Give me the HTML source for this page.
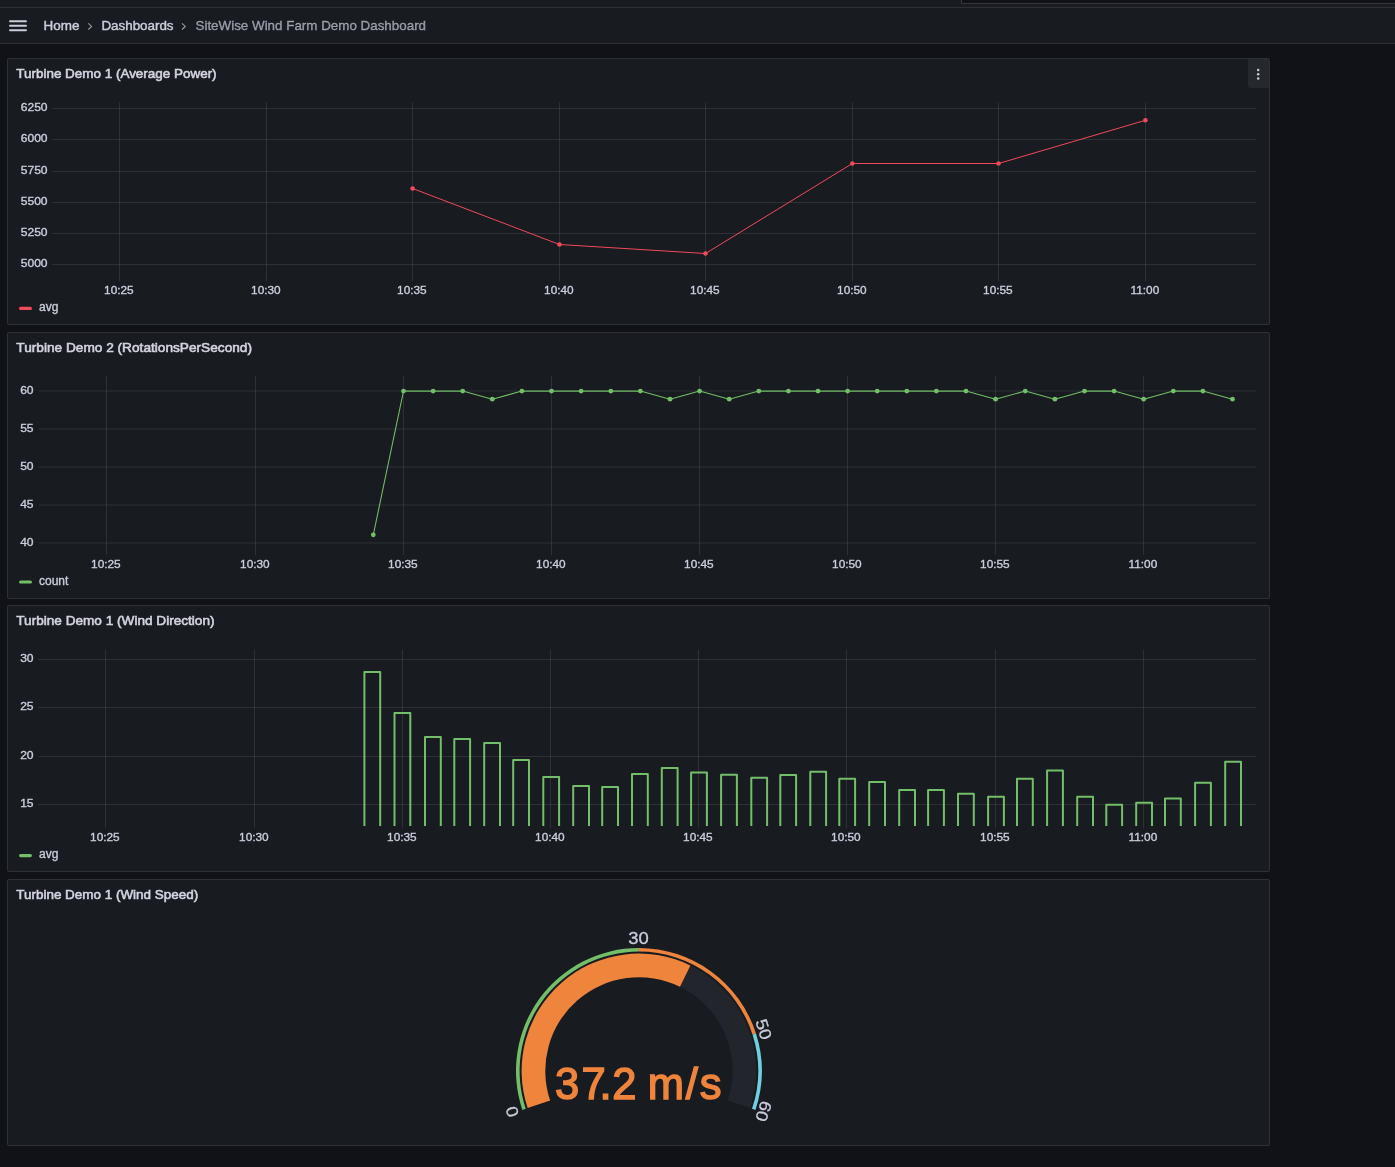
<!DOCTYPE html>
<html><head><meta charset="utf-8"><title>SiteWise Wind Farm Demo Dashboard</title>
<style>
*{box-sizing:border-box;margin:0;padding:0}
html,body{width:1395px;height:1167px;overflow:hidden;background:#111217;font-family:"Liberation Sans",sans-serif;color:#ccccdc}
.abs{position:absolute}
.topstrip{position:absolute;left:0;top:0;width:1395px;height:8px;background:#181b1f;border-bottom:1px solid rgba(204,204,220,0.12)}
.search{position:absolute;left:961px;top:-30px;width:460px;height:34px;border:1px solid rgba(204,204,220,0.2);border-radius:2px;background:#111217}
.crumbbar{position:absolute;left:0;top:8px;width:1395px;height:36px;background:#181b1f;border-bottom:1px solid rgba(204,204,220,0.12)}
.panel{position:absolute;left:7px;width:1263px;height:267px;background:#181b1f;border:1px solid rgba(204,204,220,0.12);border-radius:2px}
svg{position:absolute;left:0;top:0;will-change:transform}
#root{position:absolute;left:0;top:0;width:1395px;height:1167px;background:#111217;filter:blur(0.3px)}
</style></head><body><div id="root">
<div class="topstrip"></div>
<div class="search"></div>
<div class="crumbbar"></div>

<div class="panel" style="top:58px"></div>
<div class="panel" style="top:332px"></div>
<div class="panel" style="top:605px"></div>
<div class="panel" style="top:879px"></div>
<div class="abs" style="left:1248px;top:59px;width:21px;height:29px;background:#25282d;border-radius:0 2px 0 3px"></div>
<svg width="1395" height="1167" viewBox="0 0 1395 1167" style="font-family:'Liberation Sans',sans-serif"><g stroke="#ccccdc" stroke-width="1.9" stroke-linecap="round"><line x1="10" y1="21.2" x2="26" y2="21.2"/><line x1="10" y1="25.7" x2="26" y2="25.7"/><line x1="10" y1="30.3" x2="26" y2="30.3"/></g>
<text x="43.60" y="30.00" text-anchor="start" font-size="13.6" fill="#ccccdc" stroke="#ccccdc" stroke-width="0.45" transform="translate(43.60 30.00) scale(0.99 1) translate(-43.60 -30.00)" >Home</text>
<path d="M88.3,23.3 L91.6,26.4 L88.3,29.5" fill="none" stroke="#9a9aa8" stroke-width="1.1"/>
<text x="101.40" y="30.00" text-anchor="start" font-size="13.6" fill="#ccccdc" stroke="#ccccdc" stroke-width="0.45" transform="translate(101.40 30.00) scale(0.985 1) translate(-101.40 -30.00)" >Dashboards</text>
<path d="M182.0,23.3 L185.3,26.4 L182.0,29.5" fill="none" stroke="#9a9aa8" stroke-width="1.1"/>
<text x="195.50" y="30.00" text-anchor="start" font-size="13.6" fill="rgba(204,204,220,0.65)" stroke="rgba(204,204,220,0.65)" stroke-width="0.35" transform="translate(195.50 30.00) scale(0.985 1) translate(-195.50 -30.00)" >SiteWise Wind Farm Demo Dashboard</text>
<text x="16.30" y="78.20" text-anchor="start" font-size="13.6" fill="#d4d4e0" stroke="#d4d4e0" stroke-width="0.6" transform="translate(16.30 78.20) scale(0.99 1) translate(-16.30 -78.20)" >Turbine Demo 1 (Average Power)</text>
<text x="16.30" y="351.80" text-anchor="start" font-size="13.6" fill="#d4d4e0" stroke="#d4d4e0" stroke-width="0.6" transform="translate(16.30 351.80) scale(1.006 1) translate(-16.30 -351.80)" >Turbine Demo 2 (RotationsPerSecond)</text>
<text x="16.30" y="625.40" text-anchor="start" font-size="13.6" fill="#d4d4e0" stroke="#d4d4e0" stroke-width="0.6" >Turbine Demo 1 (Wind Direction)</text>
<text x="16.30" y="899.00" text-anchor="start" font-size="13.6" fill="#d4d4e0" stroke="#d4d4e0" stroke-width="0.6" transform="translate(16.30 899.00) scale(0.99 1) translate(-16.30 -899.00)" >Turbine Demo 1 (Wind Speed)</text>
<circle cx="1258.2" cy="70" r="1.25" fill="#ccccdc"/>
<circle cx="1258.2" cy="74.2" r="1.25" fill="#ccccdc"/>
<circle cx="1258.2" cy="78.4" r="1.25" fill="#ccccdc"/>
<line x1="52" y1="108.50" x2="1256" y2="108.50" stroke="rgba(204,204,220,0.12)" stroke-width="1"/>
<line x1="52" y1="139.50" x2="1256" y2="139.50" stroke="rgba(204,204,220,0.12)" stroke-width="1"/>
<line x1="52" y1="171.50" x2="1256" y2="171.50" stroke="rgba(204,204,220,0.12)" stroke-width="1"/>
<line x1="52" y1="202.50" x2="1256" y2="202.50" stroke="rgba(204,204,220,0.12)" stroke-width="1"/>
<line x1="52" y1="233.50" x2="1256" y2="233.50" stroke="rgba(204,204,220,0.12)" stroke-width="1"/>
<line x1="52" y1="264.50" x2="1256" y2="264.50" stroke="rgba(204,204,220,0.12)" stroke-width="1"/>
<line x1="119.50" y1="102.3" x2="119.50" y2="281.4" stroke="rgba(204,204,220,0.12)" stroke-width="1"/>
<text x="118.90" y="294.00" text-anchor="middle" font-size="11.5" fill="#ccccdc" stroke="#ccccdc" stroke-width="0.35" transform="translate(118.90 294.00) scale(1.03 1) translate(-118.90 -294.00)" >10:25</text>
<line x1="266.50" y1="102.3" x2="266.50" y2="281.4" stroke="rgba(204,204,220,0.12)" stroke-width="1"/>
<text x="265.90" y="294.00" text-anchor="middle" font-size="11.5" fill="#ccccdc" stroke="#ccccdc" stroke-width="0.35" transform="translate(265.90 294.00) scale(1.03 1) translate(-265.90 -294.00)" >10:30</text>
<line x1="412.50" y1="102.3" x2="412.50" y2="281.4" stroke="rgba(204,204,220,0.12)" stroke-width="1"/>
<text x="411.90" y="294.00" text-anchor="middle" font-size="11.5" fill="#ccccdc" stroke="#ccccdc" stroke-width="0.35" transform="translate(411.90 294.00) scale(1.03 1) translate(-411.90 -294.00)" >10:35</text>
<line x1="559.50" y1="102.3" x2="559.50" y2="281.4" stroke="rgba(204,204,220,0.12)" stroke-width="1"/>
<text x="558.90" y="294.00" text-anchor="middle" font-size="11.5" fill="#ccccdc" stroke="#ccccdc" stroke-width="0.35" transform="translate(558.90 294.00) scale(1.03 1) translate(-558.90 -294.00)" >10:40</text>
<line x1="705.50" y1="102.3" x2="705.50" y2="281.4" stroke="rgba(204,204,220,0.12)" stroke-width="1"/>
<text x="704.90" y="294.00" text-anchor="middle" font-size="11.5" fill="#ccccdc" stroke="#ccccdc" stroke-width="0.35" transform="translate(704.90 294.00) scale(1.03 1) translate(-704.90 -294.00)" >10:45</text>
<line x1="852.50" y1="102.3" x2="852.50" y2="281.4" stroke="rgba(204,204,220,0.12)" stroke-width="1"/>
<text x="851.90" y="294.00" text-anchor="middle" font-size="11.5" fill="#ccccdc" stroke="#ccccdc" stroke-width="0.35" transform="translate(851.90 294.00) scale(1.03 1) translate(-851.90 -294.00)" >10:50</text>
<line x1="998.50" y1="102.3" x2="998.50" y2="281.4" stroke="rgba(204,204,220,0.12)" stroke-width="1"/>
<text x="997.90" y="294.00" text-anchor="middle" font-size="11.5" fill="#ccccdc" stroke="#ccccdc" stroke-width="0.35" transform="translate(997.90 294.00) scale(1.03 1) translate(-997.90 -294.00)" >10:55</text>
<line x1="1145.50" y1="102.3" x2="1145.50" y2="281.4" stroke="rgba(204,204,220,0.12)" stroke-width="1"/>
<text x="1144.90" y="294.00" text-anchor="middle" font-size="11.5" fill="#ccccdc" stroke="#ccccdc" stroke-width="0.35" transform="translate(1144.90 294.00) scale(1.03 1) translate(-1144.90 -294.00)" >11:00</text>
<text x="47.60" y="111.40" text-anchor="end" font-size="11.5" fill="#ccccdc" stroke="#ccccdc" stroke-width="0.35" transform="translate(47.60 111.40) scale(1.05 1) translate(-47.60 -111.40)" >6250</text>
<text x="47.60" y="142.40" text-anchor="end" font-size="11.5" fill="#ccccdc" stroke="#ccccdc" stroke-width="0.35" transform="translate(47.60 142.40) scale(1.05 1) translate(-47.60 -142.40)" >6000</text>
<text x="47.60" y="174.40" text-anchor="end" font-size="11.5" fill="#ccccdc" stroke="#ccccdc" stroke-width="0.35" transform="translate(47.60 174.40) scale(1.05 1) translate(-47.60 -174.40)" >5750</text>
<text x="47.60" y="205.40" text-anchor="end" font-size="11.5" fill="#ccccdc" stroke="#ccccdc" stroke-width="0.35" transform="translate(47.60 205.40) scale(1.05 1) translate(-47.60 -205.40)" >5500</text>
<text x="47.60" y="236.40" text-anchor="end" font-size="11.5" fill="#ccccdc" stroke="#ccccdc" stroke-width="0.35" transform="translate(47.60 236.40) scale(1.05 1) translate(-47.60 -236.40)" >5250</text>
<text x="47.60" y="267.40" text-anchor="end" font-size="11.5" fill="#ccccdc" stroke="#ccccdc" stroke-width="0.35" transform="translate(47.60 267.40) scale(1.05 1) translate(-47.60 -267.40)" >5000</text>
<rect x="19" y="306.80" width="13" height="3.2" rx="1.6" fill="#f2495c"/>
<text x="39.00" y="311.00" text-anchor="start" font-size="12" fill="#ccccdc" stroke="#ccccdc" stroke-width="0.35" >avg</text>
<polyline fill="none" stroke="#f2495c" stroke-width="1.0" stroke-linejoin="round" points="412.6,188.5 559.5,244.5 705.5,253.5 852.3,163.5 998.5,163.5 1145.4,120.3"/>
<circle cx="412.6" cy="188.5" r="2.3" fill="#f2495c"/>
<circle cx="559.5" cy="244.5" r="2.3" fill="#f2495c"/>
<circle cx="705.5" cy="253.5" r="2.3" fill="#f2495c"/>
<circle cx="852.3" cy="163.5" r="2.3" fill="#f2495c"/>
<circle cx="998.5" cy="163.5" r="2.3" fill="#f2495c"/>
<circle cx="1145.4" cy="120.3" r="2.3" fill="#f2495c"/>
<line x1="39" y1="391.00" x2="1256" y2="391.00" stroke="rgba(204,204,220,0.12)" stroke-width="1"/>
<line x1="39" y1="429.00" x2="1256" y2="429.00" stroke="rgba(204,204,220,0.12)" stroke-width="1"/>
<line x1="39" y1="467.00" x2="1256" y2="467.00" stroke="rgba(204,204,220,0.12)" stroke-width="1"/>
<line x1="39" y1="505.00" x2="1256" y2="505.00" stroke="rgba(204,204,220,0.12)" stroke-width="1"/>
<line x1="39" y1="543.00" x2="1256" y2="543.00" stroke="rgba(204,204,220,0.12)" stroke-width="1"/>
<line x1="106.50" y1="376" x2="106.50" y2="555" stroke="rgba(204,204,220,0.12)" stroke-width="1"/>
<text x="105.90" y="567.90" text-anchor="middle" font-size="11.5" fill="#ccccdc" stroke="#ccccdc" stroke-width="0.35" transform="translate(105.90 567.90) scale(1.03 1) translate(-105.90 -567.90)" >10:25</text>
<line x1="255.50" y1="376" x2="255.50" y2="555" stroke="rgba(204,204,220,0.12)" stroke-width="1"/>
<text x="254.90" y="567.90" text-anchor="middle" font-size="11.5" fill="#ccccdc" stroke="#ccccdc" stroke-width="0.35" transform="translate(254.90 567.90) scale(1.03 1) translate(-254.90 -567.90)" >10:30</text>
<line x1="403.50" y1="376" x2="403.50" y2="555" stroke="rgba(204,204,220,0.12)" stroke-width="1"/>
<text x="402.90" y="567.90" text-anchor="middle" font-size="11.5" fill="#ccccdc" stroke="#ccccdc" stroke-width="0.35" transform="translate(402.90 567.90) scale(1.03 1) translate(-402.90 -567.90)" >10:35</text>
<line x1="551.50" y1="376" x2="551.50" y2="555" stroke="rgba(204,204,220,0.12)" stroke-width="1"/>
<text x="550.90" y="567.90" text-anchor="middle" font-size="11.5" fill="#ccccdc" stroke="#ccccdc" stroke-width="0.35" transform="translate(550.90 567.90) scale(1.03 1) translate(-550.90 -567.90)" >10:40</text>
<line x1="699.50" y1="376" x2="699.50" y2="555" stroke="rgba(204,204,220,0.12)" stroke-width="1"/>
<text x="698.90" y="567.90" text-anchor="middle" font-size="11.5" fill="#ccccdc" stroke="#ccccdc" stroke-width="0.35" transform="translate(698.90 567.90) scale(1.03 1) translate(-698.90 -567.90)" >10:45</text>
<line x1="847.50" y1="376" x2="847.50" y2="555" stroke="rgba(204,204,220,0.12)" stroke-width="1"/>
<text x="846.90" y="567.90" text-anchor="middle" font-size="11.5" fill="#ccccdc" stroke="#ccccdc" stroke-width="0.35" transform="translate(846.90 567.90) scale(1.03 1) translate(-846.90 -567.90)" >10:50</text>
<line x1="995.50" y1="376" x2="995.50" y2="555" stroke="rgba(204,204,220,0.12)" stroke-width="1"/>
<text x="994.90" y="567.90" text-anchor="middle" font-size="11.5" fill="#ccccdc" stroke="#ccccdc" stroke-width="0.35" transform="translate(994.90 567.90) scale(1.03 1) translate(-994.90 -567.90)" >10:55</text>
<line x1="1143.50" y1="376" x2="1143.50" y2="555" stroke="rgba(204,204,220,0.12)" stroke-width="1"/>
<text x="1142.90" y="567.90" text-anchor="middle" font-size="11.5" fill="#ccccdc" stroke="#ccccdc" stroke-width="0.35" transform="translate(1142.90 567.90) scale(1.03 1) translate(-1142.90 -567.90)" >11:00</text>
<text x="33.60" y="393.90" text-anchor="end" font-size="11.5" fill="#ccccdc" stroke="#ccccdc" stroke-width="0.35" transform="translate(33.60 393.90) scale(1.05 1) translate(-33.60 -393.90)" >60</text>
<text x="33.60" y="431.90" text-anchor="end" font-size="11.5" fill="#ccccdc" stroke="#ccccdc" stroke-width="0.35" transform="translate(33.60 431.90) scale(1.05 1) translate(-33.60 -431.90)" >55</text>
<text x="33.60" y="469.90" text-anchor="end" font-size="11.5" fill="#ccccdc" stroke="#ccccdc" stroke-width="0.35" transform="translate(33.60 469.90) scale(1.05 1) translate(-33.60 -469.90)" >50</text>
<text x="33.60" y="507.90" text-anchor="end" font-size="11.5" fill="#ccccdc" stroke="#ccccdc" stroke-width="0.35" transform="translate(33.60 507.90) scale(1.05 1) translate(-33.60 -507.90)" >45</text>
<text x="33.60" y="545.90" text-anchor="end" font-size="11.5" fill="#ccccdc" stroke="#ccccdc" stroke-width="0.35" transform="translate(33.60 545.90) scale(1.05 1) translate(-33.60 -545.90)" >40</text>
<rect x="19" y="580.40" width="13" height="3.2" rx="1.6" fill="#73bf69"/>
<text x="39.00" y="584.60" text-anchor="start" font-size="12" fill="#ccccdc" stroke="#ccccdc" stroke-width="0.35" >count</text>
<polyline fill="none" stroke="#73bf69" stroke-width="1.05" stroke-linejoin="round" points="373.3,534.8 403.5,391.1 433.1,391.1 462.7,391.1 492.3,399.2 521.9,391.1 551.5,391.1 581.1,391.1 610.8,391.1 640.4,391.1 670.0,399.2 699.6,391.1 729.2,399.2 758.8,391.1 788.4,391.1 818.0,391.1 847.6,391.1 877.2,391.1 906.8,391.1 936.4,391.1 966.0,391.1 995.6,399.2 1025.2,391.1 1054.9,399.2 1084.5,391.1 1114.1,391.1 1143.7,399.2 1173.3,391.1 1202.9,391.1 1232.5,399.2"/>
<circle cx="373.3" cy="534.8" r="2.4" fill="#73bf69"/>
<circle cx="403.5" cy="391.1" r="2.4" fill="#73bf69"/>
<circle cx="433.1" cy="391.1" r="2.4" fill="#73bf69"/>
<circle cx="462.7" cy="391.1" r="2.4" fill="#73bf69"/>
<circle cx="492.3" cy="399.2" r="2.4" fill="#73bf69"/>
<circle cx="521.9" cy="391.1" r="2.4" fill="#73bf69"/>
<circle cx="551.5" cy="391.1" r="2.4" fill="#73bf69"/>
<circle cx="581.1" cy="391.1" r="2.4" fill="#73bf69"/>
<circle cx="610.8" cy="391.1" r="2.4" fill="#73bf69"/>
<circle cx="640.4" cy="391.1" r="2.4" fill="#73bf69"/>
<circle cx="670.0" cy="399.2" r="2.4" fill="#73bf69"/>
<circle cx="699.6" cy="391.1" r="2.4" fill="#73bf69"/>
<circle cx="729.2" cy="399.2" r="2.4" fill="#73bf69"/>
<circle cx="758.8" cy="391.1" r="2.4" fill="#73bf69"/>
<circle cx="788.4" cy="391.1" r="2.4" fill="#73bf69"/>
<circle cx="818.0" cy="391.1" r="2.4" fill="#73bf69"/>
<circle cx="847.6" cy="391.1" r="2.4" fill="#73bf69"/>
<circle cx="877.2" cy="391.1" r="2.4" fill="#73bf69"/>
<circle cx="906.8" cy="391.1" r="2.4" fill="#73bf69"/>
<circle cx="936.4" cy="391.1" r="2.4" fill="#73bf69"/>
<circle cx="966.0" cy="391.1" r="2.4" fill="#73bf69"/>
<circle cx="995.6" cy="399.2" r="2.4" fill="#73bf69"/>
<circle cx="1025.2" cy="391.1" r="2.4" fill="#73bf69"/>
<circle cx="1054.9" cy="399.2" r="2.4" fill="#73bf69"/>
<circle cx="1084.5" cy="391.1" r="2.4" fill="#73bf69"/>
<circle cx="1114.1" cy="391.1" r="2.4" fill="#73bf69"/>
<circle cx="1143.7" cy="399.2" r="2.4" fill="#73bf69"/>
<circle cx="1173.3" cy="391.1" r="2.4" fill="#73bf69"/>
<circle cx="1202.9" cy="391.1" r="2.4" fill="#73bf69"/>
<circle cx="1232.5" cy="399.2" r="2.4" fill="#73bf69"/>
<line x1="38" y1="659.50" x2="1256" y2="659.50" stroke="rgba(204,204,220,0.12)" stroke-width="1"/>
<line x1="38" y1="707.50" x2="1256" y2="707.50" stroke="rgba(204,204,220,0.12)" stroke-width="1"/>
<line x1="38" y1="756.50" x2="1256" y2="756.50" stroke="rgba(204,204,220,0.12)" stroke-width="1"/>
<line x1="38" y1="804.50" x2="1256" y2="804.50" stroke="rgba(204,204,220,0.12)" stroke-width="1"/>
<line x1="105.50" y1="649.6" x2="105.50" y2="828.4" stroke="rgba(204,204,220,0.12)" stroke-width="1"/>
<text x="104.90" y="841.00" text-anchor="middle" font-size="11.5" fill="#ccccdc" stroke="#ccccdc" stroke-width="0.35" transform="translate(104.90 841.00) scale(1.03 1) translate(-104.90 -841.00)" >10:25</text>
<line x1="254.50" y1="649.6" x2="254.50" y2="828.4" stroke="rgba(204,204,220,0.12)" stroke-width="1"/>
<text x="253.90" y="841.00" text-anchor="middle" font-size="11.5" fill="#ccccdc" stroke="#ccccdc" stroke-width="0.35" transform="translate(253.90 841.00) scale(1.03 1) translate(-253.90 -841.00)" >10:30</text>
<line x1="402.50" y1="649.6" x2="402.50" y2="828.4" stroke="rgba(204,204,220,0.12)" stroke-width="1"/>
<text x="401.90" y="841.00" text-anchor="middle" font-size="11.5" fill="#ccccdc" stroke="#ccccdc" stroke-width="0.35" transform="translate(401.90 841.00) scale(1.03 1) translate(-401.90 -841.00)" >10:35</text>
<line x1="550.50" y1="649.6" x2="550.50" y2="828.4" stroke="rgba(204,204,220,0.12)" stroke-width="1"/>
<text x="549.90" y="841.00" text-anchor="middle" font-size="11.5" fill="#ccccdc" stroke="#ccccdc" stroke-width="0.35" transform="translate(549.90 841.00) scale(1.03 1) translate(-549.90 -841.00)" >10:40</text>
<line x1="698.50" y1="649.6" x2="698.50" y2="828.4" stroke="rgba(204,204,220,0.12)" stroke-width="1"/>
<text x="697.90" y="841.00" text-anchor="middle" font-size="11.5" fill="#ccccdc" stroke="#ccccdc" stroke-width="0.35" transform="translate(697.90 841.00) scale(1.03 1) translate(-697.90 -841.00)" >10:45</text>
<line x1="846.50" y1="649.6" x2="846.50" y2="828.4" stroke="rgba(204,204,220,0.12)" stroke-width="1"/>
<text x="845.90" y="841.00" text-anchor="middle" font-size="11.5" fill="#ccccdc" stroke="#ccccdc" stroke-width="0.35" transform="translate(845.90 841.00) scale(1.03 1) translate(-845.90 -841.00)" >10:50</text>
<line x1="995.50" y1="649.6" x2="995.50" y2="828.4" stroke="rgba(204,204,220,0.12)" stroke-width="1"/>
<text x="994.90" y="841.00" text-anchor="middle" font-size="11.5" fill="#ccccdc" stroke="#ccccdc" stroke-width="0.35" transform="translate(994.90 841.00) scale(1.03 1) translate(-994.90 -841.00)" >10:55</text>
<line x1="1143.50" y1="649.6" x2="1143.50" y2="828.4" stroke="rgba(204,204,220,0.12)" stroke-width="1"/>
<text x="1142.90" y="841.00" text-anchor="middle" font-size="11.5" fill="#ccccdc" stroke="#ccccdc" stroke-width="0.35" transform="translate(1142.90 841.00) scale(1.03 1) translate(-1142.90 -841.00)" >11:00</text>
<text x="33.60" y="662.40" text-anchor="end" font-size="11.5" fill="#ccccdc" stroke="#ccccdc" stroke-width="0.35" transform="translate(33.60 662.40) scale(1.05 1) translate(-33.60 -662.40)" >30</text>
<text x="33.60" y="710.40" text-anchor="end" font-size="11.5" fill="#ccccdc" stroke="#ccccdc" stroke-width="0.35" transform="translate(33.60 710.40) scale(1.05 1) translate(-33.60 -710.40)" >25</text>
<text x="33.60" y="759.40" text-anchor="end" font-size="11.5" fill="#ccccdc" stroke="#ccccdc" stroke-width="0.35" transform="translate(33.60 759.40) scale(1.05 1) translate(-33.60 -759.40)" >20</text>
<text x="33.60" y="807.40" text-anchor="end" font-size="11.5" fill="#ccccdc" stroke="#ccccdc" stroke-width="0.35" transform="translate(33.60 807.40) scale(1.05 1) translate(-33.60 -807.40)" >15</text>
<rect x="19" y="854.00" width="13" height="3.2" rx="1.6" fill="#73bf69"/>
<text x="39.00" y="858.20" text-anchor="start" font-size="12" fill="#ccccdc" stroke="#ccccdc" stroke-width="0.35" >avg</text>
<path d="M364.40,826 L364.40,672.00 L380.20,672.00 L380.20,826" fill="none" stroke="#73bf69" stroke-width="2" stroke-linejoin="round"/>
<path d="M394.50,826 L394.50,713.00 L410.30,713.00 L410.30,826" fill="none" stroke="#73bf69" stroke-width="2" stroke-linejoin="round"/>
<path d="M425.00,826 L425.00,737.00 L440.80,737.00 L440.80,826" fill="none" stroke="#73bf69" stroke-width="2" stroke-linejoin="round"/>
<path d="M454.30,826 L454.30,739.00 L470.10,739.00 L470.10,826" fill="none" stroke="#73bf69" stroke-width="2" stroke-linejoin="round"/>
<path d="M484.20,826 L484.20,743.00 L500.00,743.00 L500.00,826" fill="none" stroke="#73bf69" stroke-width="2" stroke-linejoin="round"/>
<path d="M513.20,826 L513.20,760.00 L529.00,760.00 L529.00,826" fill="none" stroke="#73bf69" stroke-width="2" stroke-linejoin="round"/>
<path d="M543.30,826 L543.30,777.00 L559.10,777.00 L559.10,826" fill="none" stroke="#73bf69" stroke-width="2" stroke-linejoin="round"/>
<path d="M573.20,826 L573.20,786.00 L589.00,786.00 L589.00,826" fill="none" stroke="#73bf69" stroke-width="2" stroke-linejoin="round"/>
<path d="M602.20,826 L602.20,787.00 L618.00,787.00 L618.00,826" fill="none" stroke="#73bf69" stroke-width="2" stroke-linejoin="round"/>
<path d="M632.00,826 L632.00,774.00 L647.80,774.00 L647.80,826" fill="none" stroke="#73bf69" stroke-width="2" stroke-linejoin="round"/>
<path d="M661.80,826 L661.80,768.00 L677.60,768.00 L677.60,826" fill="none" stroke="#73bf69" stroke-width="2" stroke-linejoin="round"/>
<path d="M691.10,826 L691.10,772.50 L706.90,772.50 L706.90,826" fill="none" stroke="#73bf69" stroke-width="2" stroke-linejoin="round"/>
<path d="M721.10,826 L721.10,774.70 L736.90,774.70 L736.90,826" fill="none" stroke="#73bf69" stroke-width="2" stroke-linejoin="round"/>
<path d="M751.30,826 L751.30,777.80 L767.10,777.80 L767.10,826" fill="none" stroke="#73bf69" stroke-width="2" stroke-linejoin="round"/>
<path d="M780.30,826 L780.30,774.90 L796.10,774.90 L796.10,826" fill="none" stroke="#73bf69" stroke-width="2" stroke-linejoin="round"/>
<path d="M810.30,826 L810.30,771.70 L826.10,771.70 L826.10,826" fill="none" stroke="#73bf69" stroke-width="2" stroke-linejoin="round"/>
<path d="M839.30,826 L839.30,778.80 L855.10,778.80 L855.10,826" fill="none" stroke="#73bf69" stroke-width="2" stroke-linejoin="round"/>
<path d="M869.20,826 L869.20,782.00 L885.00,782.00 L885.00,826" fill="none" stroke="#73bf69" stroke-width="2" stroke-linejoin="round"/>
<path d="M899.20,826 L899.20,790.00 L915.00,790.00 L915.00,826" fill="none" stroke="#73bf69" stroke-width="2" stroke-linejoin="round"/>
<path d="M928.10,826 L928.10,790.00 L943.90,790.00 L943.90,826" fill="none" stroke="#73bf69" stroke-width="2" stroke-linejoin="round"/>
<path d="M958.00,826 L958.00,793.80 L973.80,793.80 L973.80,826" fill="none" stroke="#73bf69" stroke-width="2" stroke-linejoin="round"/>
<path d="M988.10,826 L988.10,796.80 L1003.90,796.80 L1003.90,826" fill="none" stroke="#73bf69" stroke-width="2" stroke-linejoin="round"/>
<path d="M1017.00,826 L1017.00,778.70 L1032.80,778.70 L1032.80,826" fill="none" stroke="#73bf69" stroke-width="2" stroke-linejoin="round"/>
<path d="M1047.10,826 L1047.10,770.40 L1062.90,770.40 L1062.90,826" fill="none" stroke="#73bf69" stroke-width="2" stroke-linejoin="round"/>
<path d="M1077.20,826 L1077.20,796.80 L1093.00,796.80 L1093.00,826" fill="none" stroke="#73bf69" stroke-width="2" stroke-linejoin="round"/>
<path d="M1106.30,826 L1106.30,804.80 L1122.10,804.80 L1122.10,826" fill="none" stroke="#73bf69" stroke-width="2" stroke-linejoin="round"/>
<path d="M1136.20,826 L1136.20,802.80 L1152.00,802.80 L1152.00,826" fill="none" stroke="#73bf69" stroke-width="2" stroke-linejoin="round"/>
<path d="M1165.00,826 L1165.00,798.50 L1180.80,798.50 L1180.80,826" fill="none" stroke="#73bf69" stroke-width="2" stroke-linejoin="round"/>
<path d="M1195.10,826 L1195.10,782.70 L1210.90,782.70 L1210.90,826" fill="none" stroke="#73bf69" stroke-width="2" stroke-linejoin="round"/>
<path d="M1225.20,826 L1225.20,761.70 L1241.00,761.70 L1241.00,826" fill="none" stroke="#73bf69" stroke-width="2" stroke-linejoin="round"/>
<path d="M527.66,1108.12 A117.3,117.3 0 1 1 750.14,1108.12 L727.66,1100.60 A93.6,93.6 0 1 0 550.14,1100.60 Z" fill="#22252b"/>
<path d="M527.66,1108.12 A117.3,117.3 0 0 1 690.39,965.51 L679.99,986.80 A93.6,93.6 0 0 0 550.14,1100.60 Z" fill="#ef843c"/>
<path d="M522.35,1109.90 A122.9,122.9 0 0 1 638.90,948.00 L638.90,951.60 A119.3,119.3 0 0 0 525.76,1108.75 Z" fill="#73bf69"/>
<path d="M638.90,948.00 A122.9,122.9 0 0 1 756.00,1033.60 L752.57,1034.69 A119.3,119.3 0 0 0 638.90,951.60 Z" fill="#ef843c"/>
<path d="M756.00,1033.60 A122.9,122.9 0 0 1 755.45,1109.90 L752.04,1108.75 A119.3,119.3 0 0 0 752.57,1034.69 Z" fill="#6ed0e0"/>
<g transform="translate(512.30 1111.70) rotate(-108.5)"><text x="0" y="0" text-anchor="middle" dominant-baseline="central" font-size="16.5" fill="#ccccdc" stroke="#ccccdc" stroke-width="0.3" transform="scale(1.12 1)">0</text></g>
<g transform="translate(638.60 938.20) rotate(0.0)"><text x="0" y="0" text-anchor="middle" dominant-baseline="central" font-size="16.5" fill="#ccccdc" stroke="#ccccdc" stroke-width="0.3" transform="scale(1.12 1)">30</text></g>
<g transform="translate(763.70 1029.20) rotate(72.3)"><text x="0" y="0" text-anchor="middle" dominant-baseline="central" font-size="16.5" fill="#ccccdc" stroke="#ccccdc" stroke-width="0.3" transform="scale(1.12 1)">50</text></g>
<g transform="translate(763.70 1111.30) rotate(108.5)"><text x="0" y="0" text-anchor="middle" dominant-baseline="central" font-size="16.5" fill="#ccccdc" stroke="#ccccdc" stroke-width="0.3" transform="scale(1.12 1)">60</text></g>
<text x="567.10" y="1098.60" text-anchor="middle" font-size="43.5" fill="#ef843c" stroke="#ef843c" stroke-width="1.5" >3</text>
<text x="593.70" y="1098.60" text-anchor="middle" font-size="43.5" fill="#ef843c" stroke="#ef843c" stroke-width="1.5" >7</text>
<text x="605.60" y="1098.60" text-anchor="middle" font-size="43.5" fill="#ef843c" stroke="#ef843c" stroke-width="1.5" >.</text>
<text x="624.30" y="1098.60" text-anchor="middle" font-size="43.5" fill="#ef843c" stroke="#ef843c" stroke-width="1.5" >2</text>
<text x="665.90" y="1098.60" text-anchor="middle" font-size="43.5" fill="#ef843c" stroke="#ef843c" stroke-width="1.5" >m</text>
<text x="691.80" y="1098.60" text-anchor="middle" font-size="43.5" fill="#ef843c" stroke="#ef843c" stroke-width="1.5" >/</text>
<text x="710.50" y="1098.60" text-anchor="middle" font-size="43.5" fill="#ef843c" stroke="#ef843c" stroke-width="1.5" >s</text></svg>
</div></body></html>
